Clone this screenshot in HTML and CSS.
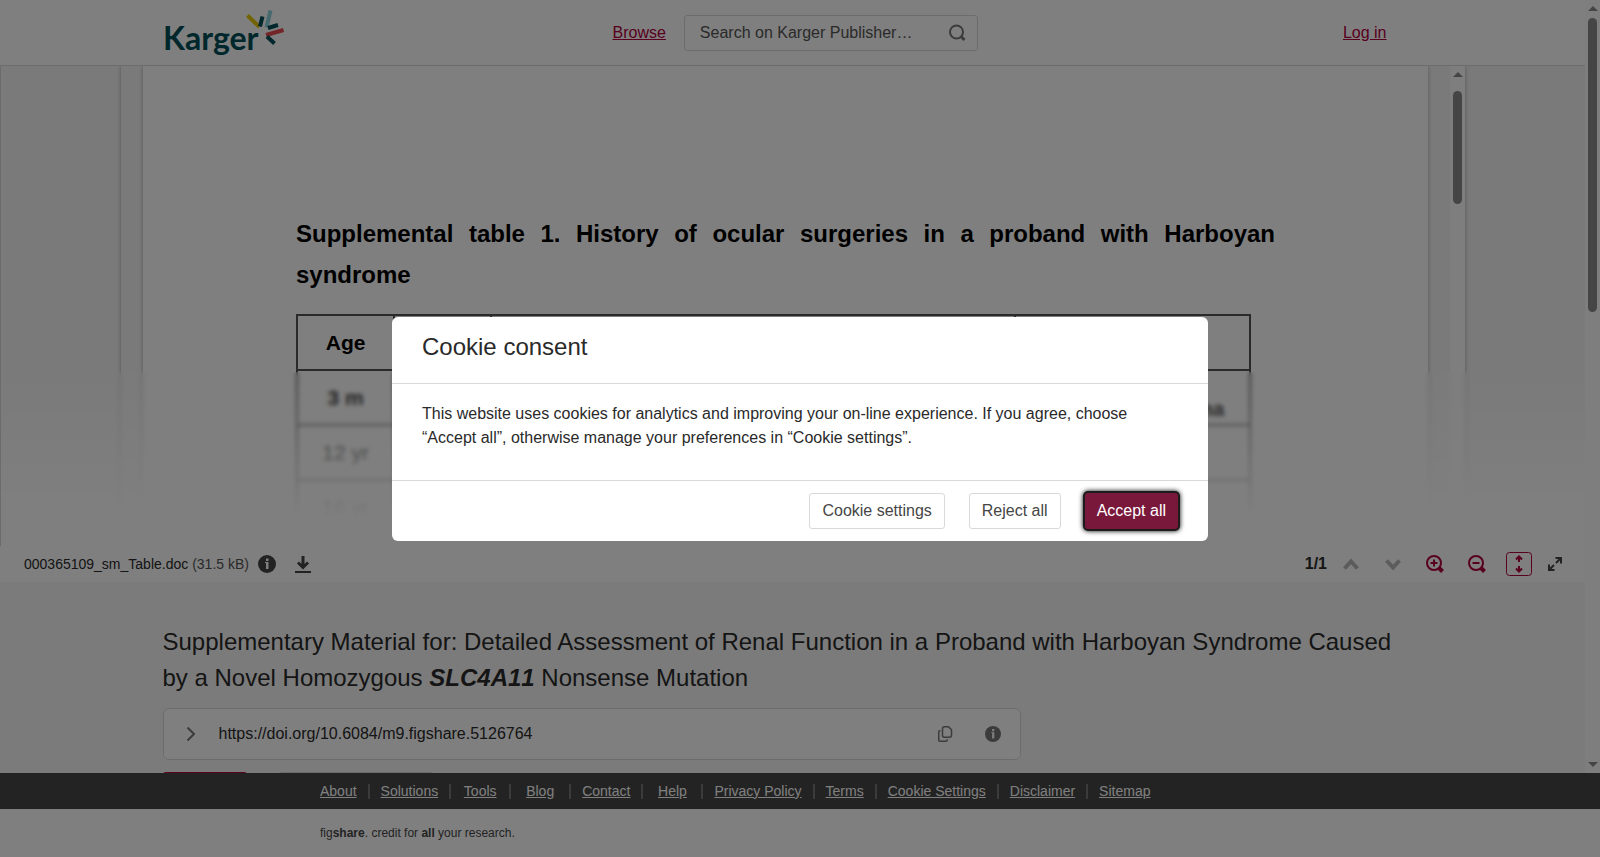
FILE: index.html
```
<!DOCTYPE html>
<html lang="en">
<head>
    <meta charset="UTF-8">
    <meta name="viewport" content="width=device-width, initial-scale=1.0">
    <title>Supplementary Material for: Detailed Assessment of Renal Function</title>
    <link rel="stylesheet" href="styles.css">
</head>
<body>
    <div class="app">
        <div class="scroller">
            <div class="page">
                <header class="header">
                    <div class="container header-inner">
                        <a href="#" class="logo" aria-label="Karger">
                            <svg width="122" height="50" viewBox="0 0 122 50">
                                <text x="0" y="42" class="logo-text">Karger</text>
                                <g fill="none" stroke-width="4">
                                    <path stroke="#e6c800" d="M84.500 7.500l12 11.500"/>
                                    <path stroke="#005058" d="M99.500 8.500l-2.500 10"/>
                                    <path stroke="#8cd2e1" d="M107.500 2.500l-4 17"/>
                                    <path stroke="#005058" d="M105 20l10-3"/>
                                    <path stroke="#e64b50" d="M103 27l17.500-5"/>
                                    <path stroke="#005058" d="M104 28.500l7.500 7"/>
                                </g>
                            </svg>
                        </a>
                        <div class="header-search">
                            <a href="#" class="link">Browse</a>
                            <form class="search">
                                <input type="text" class="search-input" placeholder="Search on Karger Publisher…" aria-label="Search on Karger Publishers">
                                <button type="button" class="search-btn" aria-label="Search">
                                    <svg width="18" height="18" viewBox="0 0 18 18" fill="none" stroke="#777" stroke-width="2">
                                        <circle cx="8.500" cy="8" r="6.500"/>
                                        <path stroke-width="3" d="M13 12.500l3.500 3.500"/>
                                    </svg>
                                </button>
                            </form>
                        </div>
                        <a href="#" class="link login">Log in</a>
                    </div>
                </header>

                <section class="viewer">
                    <div class="doc">
                        <div class="sheet">
                            <h2 class="sheet-title">Supplemental table 1. History of ocular surgeries in a proband with Harboyan syndrome</h2>
                            <table class="sheet-table">
                                <colgroup>
                                    <col class="col-s">
                                    <col class="col-s">
                                    <col class="col-l">
                                    <col class="col-m">
                                </colgroup>
                                <tr><th>Age</th><th></th><th></th><th></th></tr>
                                <tr><th>3 m</th><td></td><td></td><td class="note">ma</td></tr>
                                <tr><td>12 yr</td><td></td><td></td><td></td></tr>
                                <tr><td>16 yr</td><td></td><td></td><td></td></tr>
                            </table>
                        </div>
                        <div class="scrollbar doc-scrollbar">
                            <span class="arrow-up"></span>
                            <span class="thumb"></span>
                        </div>
                    </div>
                    <div class="fade"></div>
                </section>

                <div class="toolbar">
                    <p class="file">000365109_sm_Table.doc <span class="file-size">(31.5 kB)</span></p>
                    <button type="button" class="tool tool-info" aria-label="File info">
                        <svg width="18" height="18" viewBox="0 0 18 18">
                            <circle cx="9" cy="9" r="9" fill="#444"/>
                            <path fill="#fff" d="M8 3.500h2.500V6H8zM7 7h3.500v7H8V8H7z"/>
                        </svg>
                    </button>
                    <button type="button" class="tool tool-download" aria-label="Download">
                        <svg width="16" height="18" viewBox="0 0 16 18" fill="none" stroke="#444">
                            <path stroke-width="3" d="M8 1v11M3 7.500l5 5 5-5"/>
                            <path stroke-width="2" d="M0 17h16"/>
                        </svg>
                    </button>
                    <span class="pages">1/1</span>
                    <button type="button" class="tool" aria-label="Previous file">
                        <svg width="18" height="18" viewBox="0 0 18 18" fill="none" stroke="#b8b8b8" stroke-width="4"><path d="M2.500 13.500L9 6.500l6.500 7"/></svg>
                    </button>
                    <button type="button" class="tool" aria-label="Next file">
                        <svg width="18" height="18" viewBox="0 0 18 18" fill="none" stroke="#b8b8b8" stroke-width="4"><path d="M2.500 5.500l6.500 7 6.500-7"/></svg>
                    </button>
                    <button type="button" class="tool" aria-label="Zoom in">
                        <svg width="18" height="18" viewBox="0 0 18 18" fill="none" stroke="#b0003c" stroke-width="2">
                            <circle cx="8" cy="8" r="7"/>
                            <path d="M4.500 8h7M8 4.500v7"/>
                            <path stroke-width="4" d="M12.500 12.500l4 4"/>
                        </svg>
                    </button>
                    <button type="button" class="tool" aria-label="Zoom out">
                        <svg width="18" height="18" viewBox="0 0 18 18" fill="none" stroke="#b0003c" stroke-width="2">
                            <circle cx="8" cy="8" r="7"/>
                            <path d="M4.500 8h7"/>
                            <path stroke-width="4" d="M12.500 12.500l4 4"/>
                        </svg>
                    </button>
                    <button type="button" class="tool" aria-label="Fit to height">
                        <svg width="26" height="24" viewBox="0 0 26 24" fill="none" stroke="#b0003c">
                            <rect x=".5" y=".5" width="25" height="23" rx="3"/>
                            <path stroke-width="2" d="M13 4.500V10M13 14v5.500M10 7.500l3-3 3 3M10 16.500l3 3 3-3"/>
                        </svg>
                    </button>
                    <button type="button" class="tool tool-expand" aria-label="Full screen">
                        <svg width="14" height="14" viewBox="0 0 14 14" fill="none" stroke="#444" stroke-width="2">
                            <path d="M7.500 1H13v5.500M13 1L8 6M1 7.500V13h5.500M1 13l5-5"/>
                        </svg>
                    </button>
                </div>

                <main class="container main">
                    <h1 class="title">Supplementary Material for: Detailed Assessment of Renal Function in a Proband with Harboyan Syndrome Caused by a Novel Homozygous <em class="gene">SLC4A11</em> Nonsense Mutation</h1>
                    <div class="doi">
                        <button type="button" class="doi-btn" aria-label="Expand">
                            <svg width="10" height="16" viewBox="0 0 10 16" fill="none" stroke="#777" stroke-width="2"><path d="M1.500 1.500L8 8l-6.500 6.500"/></svg>
                        </button>
                        <span class="doi-text">https://doi.org/10.6084/m9.figshare.5126764</span>
                        <button type="button" class="doi-btn" aria-label="Copy DOI">
                            <svg width="16" height="16" viewBox="0 0 16 16" fill="none" stroke="#777" stroke-width="1.500">
                                <path d="M7.500.75h4l3 3v5.500a2 2 0 0 1-2 2h-5a2 2 0 0 1-2-2v-6.500a2 2 0 0 1 2-2z"/>
                                <path d="M3.500 4.750h-.750a1 1 0 0 0-1 1v8.500a1 1 0 0 0 1 1h6a1.500 1.500 0 0 0 1.500-1.500v-.5"/>
                            </svg>
                        </button>
                        <button type="button" class="doi-btn doi-info" aria-label="DOI info">
                            <svg width="16" height="16" viewBox="0 0 18 18">
                                <circle cx="9" cy="9" r="9" fill="#777"/>
                                <path fill="#fff" d="M8 3.500h2.500V6H8zM7 7h3.500v7H8V8H7z"/>
                            </svg>
                        </button>
                    </div>
                    <div class="actions">
                        <button type="button" class="action action-primary" aria-label="Cite"></button>
                        <button type="button" class="action action-share" aria-label="Share"></button>
                    </div>
                </main>
            </div>
            <div class="scrollbar page-scrollbar">
                <span class="arrow-up"></span>
                <span class="thumb"></span>
                <span class="arrow-down"></span>
            </div>
        </div>

        <footer>
            <nav class="footer-nav">
                <ul class="footer-inner footer-links">
                    <li><a href="#">About</a></li>
                    <li><a href="#">Solutions</a></li>
                    <li><a href="#">Tools</a></li>
                    <li><a href="#">Blog</a></li>
                    <li><a href="#">Contact</a></li>
                    <li><a href="#">Help</a></li>
                    <li><a href="#">Privacy Policy</a></li>
                    <li><a href="#">Terms</a></li>
                    <li><a href="#">Cookie Settings</a></li>
                    <li><a href="#">Disclaimer</a></li>
                    <li><a href="#">Sitemap</a></li>
                </ul>
            </nav>
            <p class="footer-inner credit">fig<b>share</b>. credit for <b>all</b> your research.</p>
        </footer>
    </div>

    <!-- Cookie consent -->
    <div class="overlay">
        <div class="modal" role="dialog" aria-modal="true" aria-labelledby="cookie-title">
            <h2 class="modal-title" id="cookie-title">Cookie consent</h2>
            <p class="modal-body">This website uses cookies for analytics and improving your on-line experience. If you agree, choose “Accept all”, otherwise manage your preferences in “Cookie settings”.</p>
            <div class="modal-footer">
                <button type="button" class="btn">Cookie settings</button>
                <button type="button" class="btn">Reject all</button>
                <button type="button" class="btn btn-primary">Accept all</button>
            </div>
        </div>
    </div>
</body>
</html>
```
FILE: styles.css
```
* {
    box-sizing: border-box;
}
body {
    margin: 0;
    font-family: "Liberation Sans", Arial, sans-serif;
    font-size: 16px;
    line-height: 24px;
    color: #2a2a2a;
    background: #fff;
}
h1, h2, p, ul {
    margin: 0;
    padding: 0;
    font-weight: normal;
}
button {
    margin: 0;
    padding: 0;
    border: 0;
    background: none;
    font: inherit;
    color: inherit;
    cursor: pointer;
}
svg {
    display: block;
}
.app {
    display: flex;
    flex-direction: column;
    height: 100vh;
}
.scroller {
    display: flex;
    flex: 1;
    min-height: 0;
    overflow: hidden;
}
.page {
    flex: 1;
    min-width: 0;
    background: #f7f7f7;
}
.container {
    max-width: 1260px;
    margin: 0 auto;
}

/* Header */
.header {
    background: #fff;
    border-bottom: 1px solid #d9d9d9;
}
.header-inner {
    display: grid;
    grid-template-columns: 450px auto 1fr;
    align-items: center;
    height: 65px;
    padding-right: 36px;
}
.logo-text {
    font-family: Lato, sans-serif;
    font-size: 32px;
    font-weight: bold;
    fill: #005058;
}
.link {
    color: #b0003c;
}
.login {
    justify-self: end;
}
.header-search {
    display: flex;
    align-items: center;
    gap: 18px;
}
.search {
    display: flex;
    align-items: center;
    width: 294px;
    height: 36px;
    border: 1px solid #d9d9d9;
    border-radius: 3px;
}
.search-input {
    flex: 1;
    min-width: 0;
    padding: 0 0 0 15px;
    border: 0;
    outline: 0;
    background: none;
    font: inherit;
}
.search-input::placeholder {
    color: #555;
    opacity: 1;
}
.search-btn {
    padding: 0 11px;
}

/* Document preview */
.viewer {
    position: relative;
    height: 480px;
    padding: 0 120px;
    border-left: 1px solid #d9d9d9;
    background: #f4f4f4;
    overflow: hidden;
}
.doc {
    display: flex;
    height: 100%;
    padding-left: 22px;
    background: #f5f5f5;
    box-shadow: 0 0 4px #aaa;
}
.sheet {
    flex: 1;
    margin-right: 22px;
    padding: 147px 153px 0;
    background: #fff;
    box-shadow: 0 0 4px #aaa;
    color: #000;
}
.sheet-title {
    font-size: 24px;
    font-weight: bold;
    line-height: 41px;
    text-align: justify;
}
.sheet-table {
    width: 97.5%;
    margin-top: 19px;
    border-collapse: collapse;
    table-layout: fixed;
    font-size: 21px;
}
.sheet-table th, .sheet-table td {
    height: 55px;
    padding: 0;
    border: 2px solid #555;
    text-align: center;
}
.sheet-table .note {
    padding: 22px 24px 0 0;
    text-align: right;
    font-weight: bold;
}
.col-s {
    width: 10.2%;
}
.col-l {
    width: 55%;
}
.col-m {
    width: 24.6%;
}
.fade {
    position: absolute;
    left: 0;
    right: 0;
    bottom: 0;
    height: 174px;
    background: linear-gradient(rgba(255,255,255,.1), #fff 85%);
    backdrop-filter: blur(2px);
}

/* Scrollbars */
.scrollbar {
    display: flex;
    flex-direction: column;
    align-items: center;
    width: 15px;
    background: #fcfcfc;
}
.thumb {
    width: 9px;
    border-radius: 5px;
    background: #8b8b8b;
}
.arrow-up, .arrow-down {
    border: 5px solid transparent;
    border-top-width: 0;
    border-bottom-color: #8b8b8b;
}
.arrow-down {
    margin-top: auto;
    border-width: 5px 5px 0;
    border-top-color: #8b8b8b;
}
.page-scrollbar {
    padding: 6px 0;
}
.page-scrollbar .thumb {
    height: 294px;
    margin-top: 7px;
}
.doc-scrollbar {
    padding: 6px 0;
}
.doc-scrollbar .thumb {
    height: 113px;
    margin-top: 14px;
}

/* File toolbar */
.toolbar {
    display: flex;
    align-items: center;
    height: 36px;
    padding: 0 15px 0 24px;
    background: #fff;
}
.file {
    font-size: 14px;
}
.file-size {
    color: #555;
}
.tool {
    display: flex;
    justify-content: center;
    width: 42px;
}
.tool-info {
    width: 18px;
    margin-left: 9px;
}
.tool-download {
    width: 16px;
    margin-left: 19px;
}
.tool-expand {
    width: 30px;
}
.pages {
    margin-left: auto;
    margin-right: 3px;
    font-weight: bold;
}

/* Item details */
.main {
    padding-top: 42px;
}
.title {
    font-size: 24px;
    line-height: 36px;
}
.gene {
    font-weight: bold;
    font-kerning: none;
}
.doi {
    display: flex;
    align-items: center;
    max-width: 858px;
    height: 52px;
    margin-top: 12px;
    padding: 0 19px 0 22px;
    border: 1px solid #d9d9d9;
    border-radius: 6px;
    background: #fff;
}
.doi-text {
    flex: 1;
    margin-left: 23px;
}
.doi-info {
    margin-left: 32px;
}
.actions {
    display: flex;
    gap: 32px;
    margin-top: 12px;
}
.action {
    width: 84px;
    height: 36px;
    border-radius: 3px;
    background: #b0003c;
}
.action-share {
    width: 155px;
    border: 1px solid #d9d9d9;
    background: #fff;
}

/* Footer */
.footer-inner {
    max-width: 960px;
    margin: 0 auto;
}
.footer-nav {
    background: #464646;
}
.footer-links {
    display: flex;
    align-items: center;
    height: 36px;
    list-style: none;
    font-size: 14px;
    line-height: 15px;
}
.footer-links li {
    min-width: 60px;
    padding: 0 11px;
    border-right: 2px solid #777;
    text-align: center;
    white-space: nowrap;
}
.footer-links li:first-child {
    min-width: 0;
    padding-left: 0;
}
.footer-links li:last-child {
    border-right: 0;
}
.footer-links a {
    color: #fff;
}
.credit {
    padding: 12px 0;
    font-size: 12px;
    color: #464646;
}

/* Modal */
.overlay {
    position: fixed;
    inset: 0;
    display: flex;
    align-items: center;
    justify-content: center;
    background: rgba(0,0,0,0.5);
}
.modal {
    width: 816px;
    max-width: 100%;
    border-radius: 6px;
    background: #fff;
}
.modal-title {
    padding: 12px 30px 18px;
    border-bottom: 1px solid #d9d9d9;
    font-size: 24px;
    line-height: 36px;
}
.modal-body {
    padding: 18px 30px 30px;
    border-bottom: 1px solid #d9d9d9;
}
.modal-footer {
    display: flex;
    justify-content: flex-end;
    gap: 24px;
    padding: 12px 30px;
}
.btn {
    height: 36px;
    padding: 0 12px;
    border: 1px solid #d9d9d9;
    border-radius: 3px;
    background: #fff;
    color: #464646;
}
.btn-primary {
    border: 0;
    background: #7a183c;
    color: #fff;
    box-shadow: 0 0 0 2px #1c1c1c, 0 0 5px 2px #000;
}
```
